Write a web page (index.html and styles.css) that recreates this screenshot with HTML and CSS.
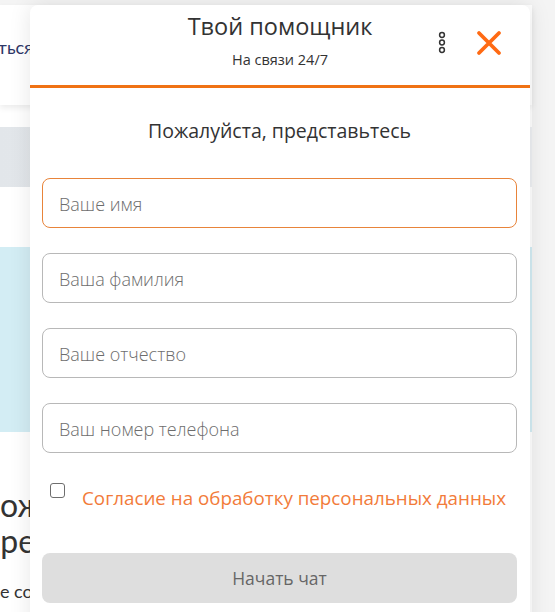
FILE: index.html
```html
<!DOCTYPE html>
<html lang="ru">
<head>
    <meta charset="utf-8">
    <link rel="stylesheet" href="styles.css">
</head>
<body>

<div class="site">
    <header class="site-header">
        <nav class="site-nav">
            <a href="#">Зарегистрироваться</a>
        </nav>
    </header>
    <div class="site-tabs"></div>
    <div class="site-banner"></div>
    <section class="promo">
        <h2>Пожелания и<br>Предложения</h2>
        <p>Все сотрудники на связи</p>
    </section>
</div>

<div class="chat">
    <div class="chat-header">
        <div></div>
        <div class="chat-title">
            <h1>Твой помощник</h1>
            <div class="chat-status">На связи 24/7</div>
        </div>
        <div class="chat-actions">
            <button class="icon-btn" title="Меню">
                <svg width="10" height="24" viewBox="0 0 10 24">
                    <circle cx="5" cy="4" r="2.4" fill="none" stroke="#333" stroke-width="1.5"/>
                    <circle cx="5" cy="11.5" r="2.4" fill="none" stroke="#333" stroke-width="1.5"/>
                    <circle cx="5" cy="19" r="2.4" fill="none" stroke="#333" stroke-width="1.5"/>
                </svg>
            </button>
            <button class="icon-btn" title="Закрыть">
                <svg width="26" height="26" viewBox="0 0 26 26">
                    <path d="M3 3 L23 23 M23 3 L3 23" stroke="#ff6a13" stroke-width="3.8" stroke-linecap="round"/>
                </svg>
            </button>
        </div>
    </div>

    <form class="chat-form">
        <div class="chat-intro">Пожалуйста, представьтесь</div>
        <input class="field field-active" type="text" placeholder="Ваше имя">
        <input class="field" type="text" placeholder="Ваша фамилия">
        <input class="field" type="text" placeholder="Ваше отчество">
        <input class="field" type="tel" placeholder="Ваш номер телефона">
        <label class="consent">
            <span class="checkbox"></span>
            <span class="consent-text">Согласие на обработку персональных данных</span>
        </label>
        <button class="start-btn" type="button">Начать чат</button>
    </form>
</div>

</body>
</html>
```

FILE: styles.css
```css
html, body {
    margin: 0;
    height: 612px;
    overflow: hidden;
}
body {
    background-color: #f4f4f4;
    font-family: "Open Sans", Arial, sans-serif;
    position: relative;
}

/* page behind the widget */
.site {
    width: 532px;
    margin-top: 5px;
    background-color: white;
    min-height: 620px;
}
.site-header {
    height: 100px;
    box-sizing: border-box;
    padding-bottom: 16px;
    display: flex;
    align-items: center;
    box-shadow: 0 3px 6px rgba(0,0,0,0.08);
}
.site-nav {
    width: 33px;
    display: flex;
    justify-content: flex-end;
}
.site-nav a {
    font-family: Lato, sans-serif;
    font-size: 18px;
    color: #2e3768;
    text-decoration: none;
    white-space: nowrap;
}
.site-tabs {
    height: 60px;
    margin-top: 22px;
    background: linear-gradient(to right, #e2e6ea, #eef0f3);
}
.site-banner {
    height: 185px;
    margin-top: 60px;
    background-color: #d3edf4;
}
.promo {
    width: 56px;
    overflow: hidden;
    margin-left: -23px;
    padding-top: 55px;
    white-space: nowrap;
}
.promo h2 {
    margin: 0;
    font-family: Lato, sans-serif;
    font-weight: 400;
    font-size: 32px;
    line-height: 36px;
    color: #333;
}
.promo p {
    margin: 21px 0 0;
    padding-left: 3px;
    font-family: Lato, sans-serif;
    font-size: 18px;
    color: #333;
}

/* chat widget */
.chat {
    position: absolute;
    left: 30px;
    top: 5px;
    width: 500px;
    height: 640px;
    background-color: white;
    border-radius: 8px 8px 0 0;
    box-shadow: 0 0 22px rgba(0,0,0,0.1);
    color: #333;
}
.chat-header {
    height: 80px;
    border-bottom: 3px solid #f07214;
    display: grid;
    grid-template-columns: 1fr auto 1fr;
}
.chat-title {
    text-align: center;
}
.chat-title h1 {
    margin: 5px 0 0;
    font-size: 23.5px;
    font-weight: 400;
    line-height: 32px;
}
.chat-status {
    margin-top: 9px;
    font-size: 14.5px;
    line-height: 18px;
}
.chat-actions {
    display: flex;
    justify-content: flex-end;
    align-items: center;
    gap: 29px;
    padding: 0 28px 4px 0;
}
.icon-btn {
    border: none;
    background: none;
    padding: 0;
    display: flex;
    cursor: pointer;
}

.chat-form {
    display: flex;
    flex-direction: column;
    padding: 0 13px 0 12px;
}
.chat-intro {
    text-align: center;
    font-size: 19.5px;
    line-height: 26px;
    margin: 30px 0 34px;
}
.field {
    height: 50px;
    box-sizing: border-box;
    border: 1px solid #b8b8b8;
    border-radius: 8px;
    padding: 2px 16px 0;
    margin-bottom: 25px;
    font-family: "Open Sans", Arial, sans-serif;
    font-size: 18px;
    font-weight: 300;
    color: #333;
    outline: none;
}
.field::placeholder {
    color: #6d6d6d;
}
.field-active {
    border-color: #e8843a;
}
.consent {
    display: flex;
    align-items: flex-start;
    gap: 17px;
    padding: 5px 0 0 8px;
}
.checkbox {
    width: 15px;
    height: 15px;
    box-sizing: border-box;
    border: 1.5px solid #6e6e6e;
    border-radius: 3px;
    flex-shrink: 0;
}
.consent-text {
    font-size: 18.8px;
    line-height: 24px;
    color: #f27b3a;
    margin-top: 3px;
}
.start-btn {
    margin-top: 43px;
    height: 50px;
    border: none;
    border-radius: 8px;
    background-color: #dedede;
    font-family: "Open Sans", Arial, sans-serif;
    font-size: 17.5px;
    color: #666;
}
```
